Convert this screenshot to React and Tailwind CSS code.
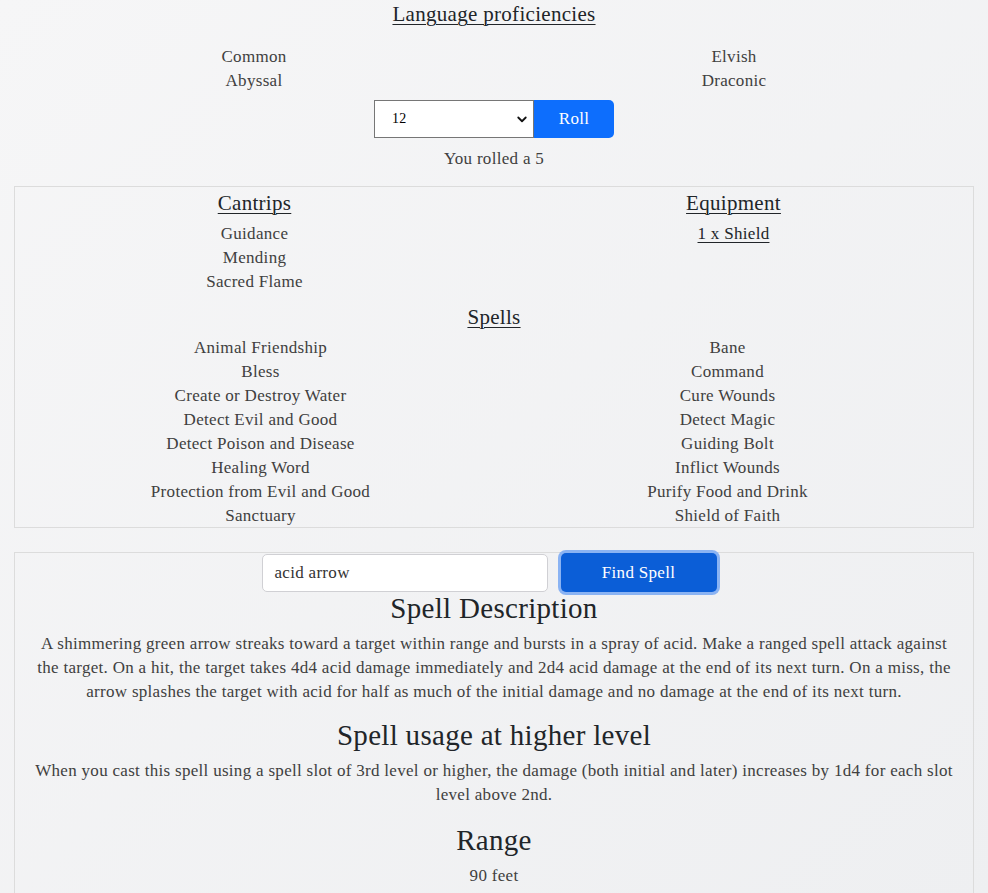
const languages = ["Common", "Elvish", "Abyssal", "Draconic"];

const cantrips = ["Guidance", "Mending", "Sacred Flame"];

const spells = [
  "Animal Friendship",
  "Bane",
  "Bless",
  "Command",
  "Create or Destroy Water",
  "Cure Wounds",
  "Detect Evil and Good",
  "Detect Magic",
  "Detect Poison and Disease",
  "Guiding Bolt",
  "Healing Word",
  "Inflict Wounds",
  "Protection from Evil and Good",
  "Purify Food and Drink",
  "Sanctuary",
  "Shield of Faith",
];

const serif = "font-['Liberation_Serif',serif] text-[17px] tracking-[0.3px]";

function Heading({ children, className = "" }) {
  return (
    <h5 className={`text-[21px] leading-[24px] underline underline-offset-[3px] decoration-1 text-[#212529] ${className}`}>
      {children}
    </h5>
  );
}

export default function App() {
  return (
    <div className={`min-h-[893px] bg-gradient-to-br from-[#f6f6f7] to-[#eeeff1] text-[#404040] ${serif} leading-[24px] text-center`}>
      {/* Languages */}
      <div className="pt-[2px]">
        <Heading>Language proficiencies</Heading>
        <div className="mx-[14px] mt-[19px] grid grid-cols-2">
          {languages.map((l) => (
            <div key={l}>{l}</div>
          ))}
        </div>
        <div className="mt-[7px] flex justify-center">
          <div className="w-[160px] h-[38px] bg-white border border-[#767676] flex items-center justify-between pl-[17px] pr-[5px] text-[14px] text-black">
            <span>12</span>
            <svg width="12" height="12" viewBox="0 0 16 16" fill="none" stroke="#111" strokeWidth="2.4" strokeLinecap="round" strokeLinejoin="round">
              <path d="M3 6l5 5 5-5" />
            </svg>
          </div>
          <button className="w-[80px] h-[38px] bg-[#0d6efd] text-white rounded-r-[5px]">Roll</button>
        </div>
        <div className="mt-[9px]">You rolled a 5</div>
      </div>

      {/* Cantrips / Equipment / Spells */}
      <div className="mx-[14px] mt-[15px] border border-[#dcdcdc] pt-[4px]">
        <div className="grid grid-cols-2">
          <div>
            <Heading>Cantrips</Heading>
            <div className="mt-[7px]">
              {cantrips.map((c) => (
                <div key={c}>{c}</div>
              ))}
            </div>
          </div>
          <div>
            <Heading>Equipment</Heading>
            <div className="mt-[7px]">
              <span className="underline underline-offset-[3px] decoration-1 text-[#212529]">1 x Shield</span>
            </div>
          </div>
        </div>
        <Heading className="mt-[11px]">Spells</Heading>
        <div className="mt-[7px] ml-[12px] w-[934px] h-[191px] grid grid-cols-2 auto-rows-[24px]">
          {spells.map((s) => (
            <div key={s}>{s}</div>
          ))}
        </div>
      </div>

      {/* Spell search */}
      <div className="mx-[14px] mt-[24px] border border-[#dcdcdc] pb-[20px]">
        <div className="flex justify-center items-center gap-[13px] pr-[10px] -mt-[1px]">
          <div className="w-[286px] h-[38px] mt-[2px] bg-white border border-[#d0d0d4] rounded-[5px] flex items-center px-[12px] text-[#333]">
            acid arrow
          </div>
          <button className="w-[156px] h-[39px] mt-[1px] bg-[#0b5ed7] text-white rounded-[5px] ring-[3px] ring-[#8ab3f3]">
            Find Spell
          </button>
        </div>
        <h3 className="-mt-[1px] text-[29px] leading-[34px] text-[#212529]">Spell Description</h3>
        <p className="mt-[7px] px-[20px]">
          A shimmering green arrow streaks toward a target within range and bursts in a spray of acid. Make a ranged spell attack against the target. On a hit, the target takes 4d4 acid damage immediately and 2d4 acid damage at the end of its next turn. On a miss, the arrow splashes the target with acid for half as much of the initial damage and no damage at the end of its next turn.
        </p>
        <h3 className="mt-[14px] text-[29px] leading-[34px] text-[#212529]">Spell usage at higher level</h3>
        <p className="mt-[7px] px-[20px]">
          When you cast this spell using a spell slot of 3rd level or higher, the damage (both initial and later) increases by 1d4 for each slot level above 2nd.
        </p>
        <h3 className="mt-[16px] text-[29px] leading-[34px] text-[#212529]">Range</h3>
        <p className="mt-[7px]">90 feet</p>
      </div>
    </div>
  );
}
